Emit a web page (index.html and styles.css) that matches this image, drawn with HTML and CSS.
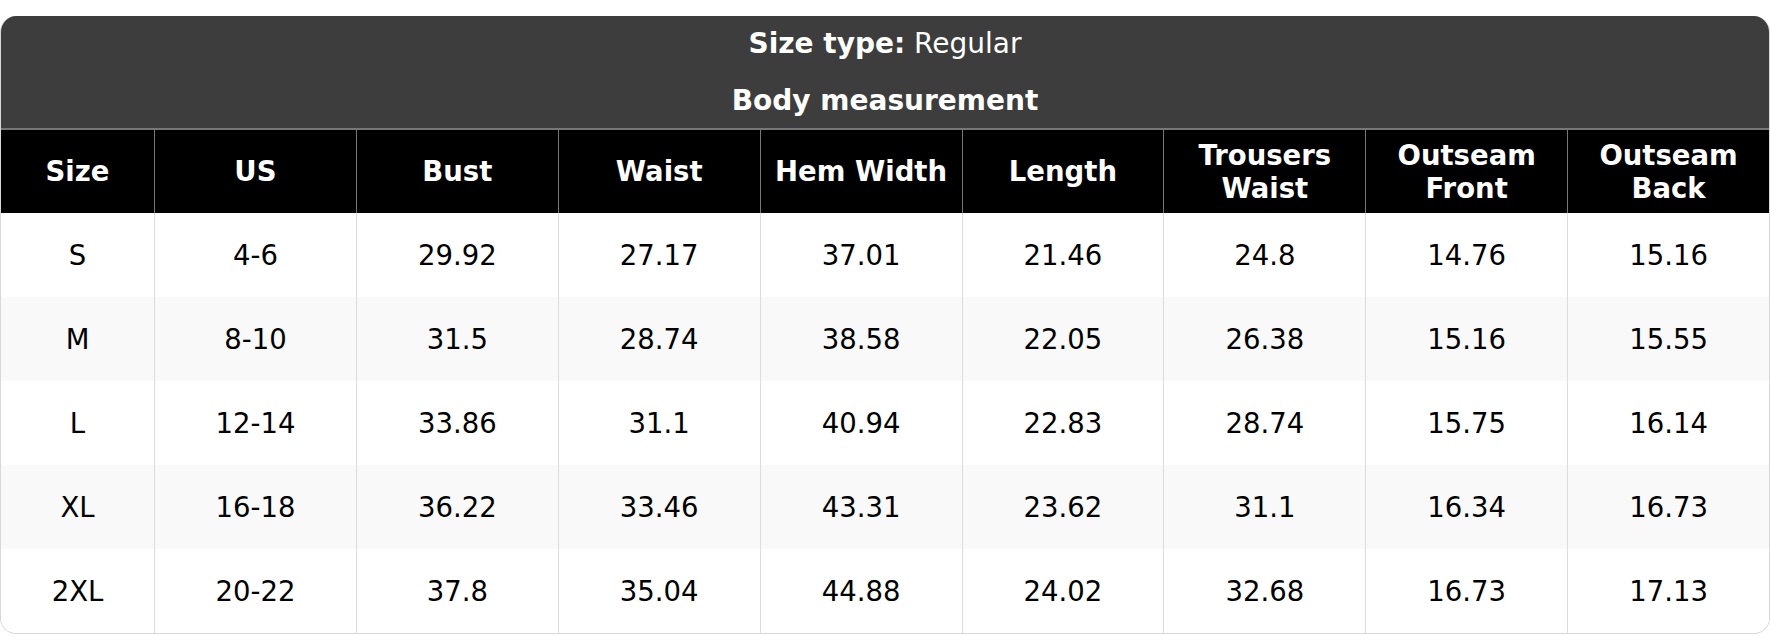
FILE: index.html
```html
<!DOCTYPE html>
<html lang="en">
<head>
<meta charset="utf-8">
<title>Size chart</title>
<link rel="stylesheet" href="styles.css">
</head>
<body>
<div class="chart">
  <div class="caption"><span><b>Size type:</b> Regular</span></div>
  <div class="caption caption-bold">Body measurement</div>
  <div class="row head">
    <div class="cell">Size</div>
    <div class="cell">US</div>
    <div class="cell">Bust</div>
    <div class="cell">Waist</div>
    <div class="cell">Hem Width</div>
    <div class="cell">Length</div>
    <div class="cell">Trousers<br>Waist</div>
    <div class="cell">Outseam<br>Front</div>
    <div class="cell">Outseam<br>Back</div>
  </div>
  <div class="row">
    <div class="cell">S</div><div class="cell">4-6</div><div class="cell">29.92</div><div class="cell">27.17</div><div class="cell">37.01</div><div class="cell">21.46</div><div class="cell">24.8</div><div class="cell">14.76</div><div class="cell">15.16</div>
  </div>
  <div class="row alt">
    <div class="cell">M</div><div class="cell">8-10</div><div class="cell">31.5</div><div class="cell">28.74</div><div class="cell">38.58</div><div class="cell">22.05</div><div class="cell">26.38</div><div class="cell">15.16</div><div class="cell">15.55</div>
  </div>
  <div class="row">
    <div class="cell">L</div><div class="cell">12-14</div><div class="cell">33.86</div><div class="cell">31.1</div><div class="cell">40.94</div><div class="cell">22.83</div><div class="cell">28.74</div><div class="cell">15.75</div><div class="cell">16.14</div>
  </div>
  <div class="row alt">
    <div class="cell">XL</div><div class="cell">16-18</div><div class="cell">36.22</div><div class="cell">33.46</div><div class="cell">43.31</div><div class="cell">23.62</div><div class="cell">31.1</div><div class="cell">16.34</div><div class="cell">16.73</div>
  </div>
  <div class="row">
    <div class="cell">2XL</div><div class="cell">20-22</div><div class="cell">37.8</div><div class="cell">35.04</div><div class="cell">44.88</div><div class="cell">24.02</div><div class="cell">32.68</div><div class="cell">16.73</div><div class="cell">17.13</div>
  </div>
</div>
</body>
</html>
```
FILE: styles.css
```css
html, body {
  margin: 0;
  padding: 0;
  background: #ffffff;
}
body {
  padding-top: 16px;
  font-family: "DejaVu Sans", Verdana, sans-serif;
  font-size: 27.5px;
  color: #000;
}
.chart {
  width: 1770px;
  box-sizing: border-box;
  border: 1px solid #d8d8d8;
  border-top: none;
  border-radius: 16px;
  overflow: hidden;
}
.caption {
  height: 56px;
  background: #3d3d3d;
  color: #fff;
  font-size: 28px;
  display: flex;
  align-items: center;
  justify-content: center;
  padding-bottom: 1px;
  box-sizing: border-box;
}
.caption-bold {
  font-weight: bold;
  padding-bottom: 0;
}
.row {
  display: grid;
  grid-template-columns: 153px repeat(8, 1fr);
  height: 84px;
  background: #fff;
}
.row.alt {
  background: #f9f9f9;
}
.row.head {
  height: 85px;
  background: #000;
  color: #fff;
  font-weight: bold;
  border-top: 2px solid #777;
  box-sizing: border-box;
  line-height: 1.2;
}
.cell {
  display: flex;
  align-items: center;
  justify-content: center;
  text-align: center;
  border-left: 1px solid #dcdcdc;
}
.cell:first-child {
  border-left: none;
}
.head .cell {
  border-left-color: #777;
}
```
